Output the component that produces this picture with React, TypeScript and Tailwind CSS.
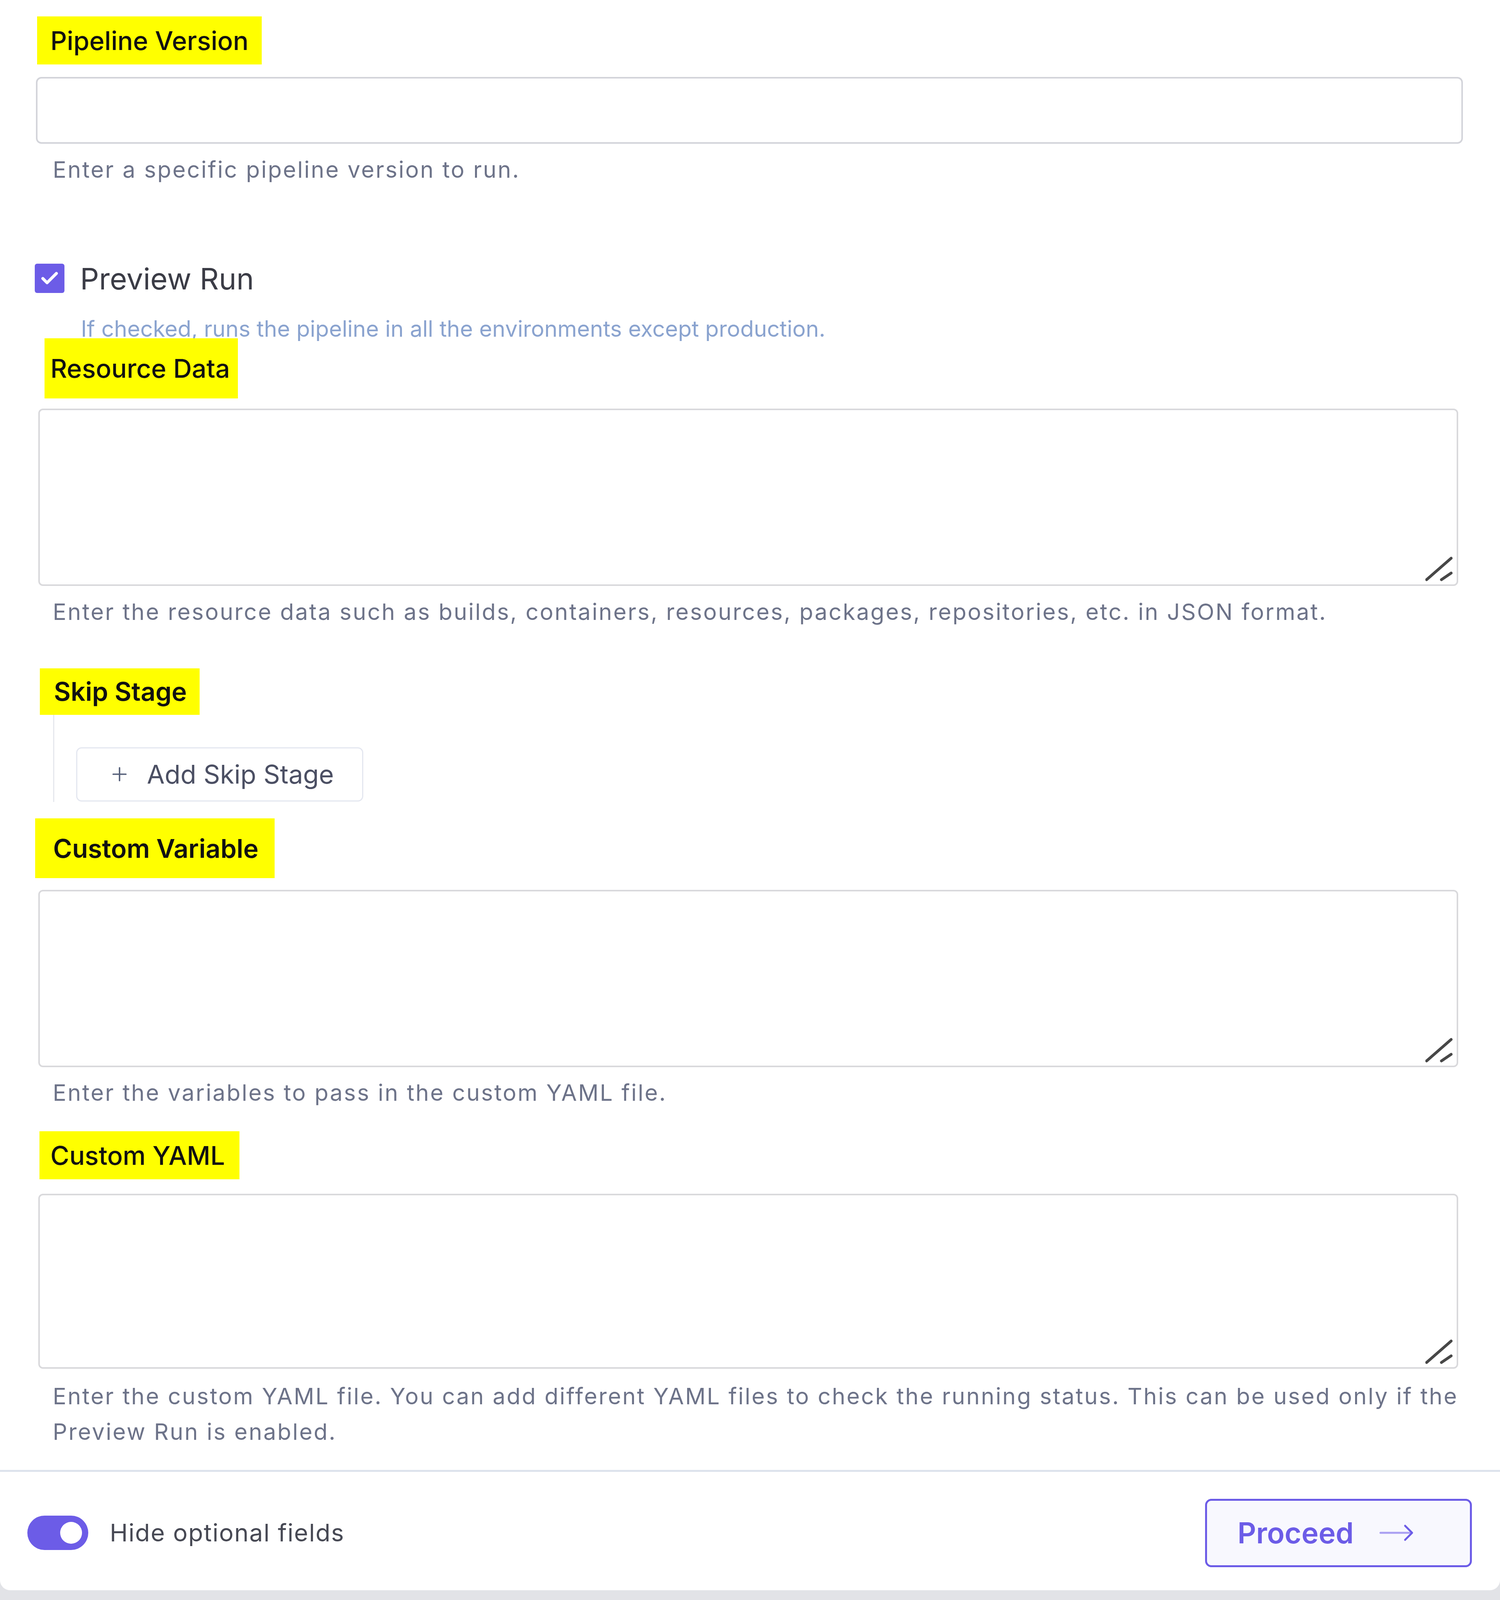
import { Check, Plus } from "lucide-react";

// vertical unit: 1/4412 of the viewport height, so the whole form fits the frame
const labelText = "text-[66px] font-medium leading-none text-[#111111]";
const helpText =
  "pl-[43px] text-[58px] leading-[calc(var(--u)*98)] tracking-[0.055em] text-[#6d7389] whitespace-nowrap";

function Highlight({
  children,
  className,
}: {
  children: React.ReactNode;
  className: string;
}) {
  return (
    <div className={`flex w-fit items-center bg-[#ffff00] ${className}`}>
      <span className={labelText}>{children}</span>
    </div>
  );
}

function ResizeGrip() {
  return (
    <svg
      className="pointer-events-none absolute bottom-[12px] right-[14px]"
      width="70"
      height="70"
      viewBox="0 0 70 70"
      fill="none"
      stroke="#474747"
      strokeWidth="7"
      strokeLinecap="round"
    >
      <line x1="3" y1="66" x2="66" y2="11" />
      <line x1="41" y1="66" x2="66" y2="49" />
    </svg>
  );
}

function TextBox({ className }: { className: string }) {
  return (
    <div className={`relative ml-[6px] mr-[12px] ${className}`}>
      <textarea className="block h-full w-full resize-none rounded-[12px] border-[4px] border-[#d9d9dc] bg-white outline-none" />
      <ResizeGrip />
    </div>
  );
}

export default function App() {
  return (
    <div className="flex h-screen flex-col bg-[#e2e3e7] font-['Inter',sans-serif] [--u:calc(100vh/4412)]">
      <div className="rounded-b-[26px] bg-white">
        <div className="pl-[92px] pr-[95px] pt-[calc(var(--u)*45)]">
          {/* Pipeline Version */}
          <Highlight className="ml-[3px] h-[calc(var(--u)*133)] px-[34px]">
            Pipeline Version
          </Highlight>
          <input
            type="text"
            className="mt-[calc(var(--u)*34)] block h-[calc(var(--u)*184)] w-full rounded-[14px] border-[4px] border-[#d3d4da] bg-white outline-none"
          />
          <p className={`mt-[calc(var(--u)*23)] h-[calc(var(--u)*98)] ${helpText}`}>
            Enter a specific pipeline version to run.
          </p>

          {/* Preview Run */}
          <div className="mt-[calc(var(--u)*206)] flex h-[calc(var(--u)*90)] items-center gap-[40px]">
            <span className="-ml-[3px] flex h-[75px] w-[76px] items-center justify-center rounded-[6px] bg-[#6c5ce7]">
              <Check className="h-[52px] w-[52px] text-white" strokeWidth={3.5} />
            </span>
            <span className="text-[76px] leading-none text-[#3b3c46]">
              Preview Run
            </span>
          </div>
          <p className="ml-[115px] mt-[calc(var(--u)*59)] h-[calc(var(--u)*70)] text-[57px] leading-[calc(var(--u)*70)] text-[#8aa3cf] whitespace-nowrap">
            If checked, runs the pipeline in all the environments except
            production.
          </p>

          {/* Resource Data */}
          <Highlight className="relative mt-[calc(var(--u)*-9)] ml-[22px] h-[calc(var(--u)*166)] pl-[15px] pr-[20px]">
            Resource Data
          </Highlight>
          <TextBox className="mt-[calc(var(--u)*28)] h-[calc(var(--u)*489)]" />
          <p className={`mt-[calc(var(--u)*22)] h-[calc(var(--u)*98)] ${helpText}`}>
            Enter the resource data such as builds, containers, resources,
            packages, repositories, etc. in JSON format.
          </p>

          {/* Skip Stage */}
          <div className="ml-[10px] mt-[calc(var(--u)*107)] flex h-[calc(var(--u)*128)] w-fit items-center bg-[#ffff00] pl-[36px] pr-[33px]">
            <span className="text-[66px] font-semibold leading-none text-[#111111]">
              Skip Stage
            </span>
          </div>
          <div className="ml-[44px] h-[calc(var(--u)*240)] border-l-[3px] border-[#e6e8ee] pl-[56px] pt-[calc(var(--u)*90)]">
            <button className="flex h-[calc(var(--u)*149)] w-[735px] items-center gap-[42px] rounded-[14px] border-[3px] border-[#e4e7f0] bg-white pl-[80px]">
              <Plus className="h-[56px] w-[56px] text-[#56607a]" strokeWidth={1.6} />
              <span className="text-[66px] leading-none text-[#4b4f63]">
                Add Skip Stage
              </span>
            </button>
          </div>

          {/* Custom Variable */}
          <div className="-ml-[2px] mt-[calc(var(--u)*46)] flex h-[calc(var(--u)*165)] w-fit items-center bg-[#ffff00] pl-[46px] pr-[41px]">
            <span className="text-[66px] font-semibold leading-none text-[#111111]">
              Custom Variable
            </span>
          </div>
          <TextBox className="mt-[calc(var(--u)*32)] h-[calc(var(--u)*489)]" />
          <p className={`mt-[calc(var(--u)*21)] h-[calc(var(--u)*98)] ${helpText}`}>
            Enter the variables to pass in the custom YAML file.
          </p>

          {/* Custom YAML */}
          <Highlight className="ml-[9px] mt-[calc(var(--u)*58)] h-[calc(var(--u)*132)] pl-[28px] pr-[37px]">
            Custom YAML
          </Highlight>
          <TextBox className="mt-[calc(var(--u)*40)] h-[calc(var(--u)*483)]" />
          <p className={`mt-[calc(var(--u)*27)] ${helpText}`}>
            Enter the custom YAML file. You can add different YAML files to
            check the running status. This can be used only if the
            <br />
            Preview Run is enabled.
          </p>
        </div>

        <div className="mt-[calc(var(--u)*56)] h-[5px] bg-[#dde3ec]" />

        {/* Footer */}
        <div className="flex h-[calc(var(--u)*326)] items-center justify-between pl-[70px] pr-[72px] pt-[calc(var(--u)*10)]">
          <div className="flex items-center gap-[55px]">
            <span className="flex h-[88px] w-[156px] items-center justify-end rounded-full bg-[#6c5ce7] pr-[16px]">
              <span className="h-[56px] w-[56px] rounded-full bg-white" />
            </span>
            <span className="text-[62px] leading-none tracking-[0.03em] text-[#474954]">
              Hide optional fields
            </span>
          </div>
          <button className="flex h-[calc(var(--u)*189)] w-[683px] items-center gap-[66px] rounded-[16px] border-[5px] border-[#6c5ce7] bg-[#f8f8fe] pl-[78px]">
            <span className="text-[74px] font-semibold leading-none text-[#6c5ce7]">
              Proceed
            </span>
            <svg
              width="88"
              height="44"
              viewBox="0 0 88 44"
              fill="none"
              strokeLinecap="round"
              strokeLinejoin="round"
            >
              <line x1="3" y1="22" x2="82" y2="22" stroke="#a99ff2" strokeWidth="5" />
              <path d="M66 4 L84 22 L66 40" stroke="#6c5ce7" strokeWidth="5" />
            </svg>
          </button>
        </div>
      </div>
    </div>
  );
}
